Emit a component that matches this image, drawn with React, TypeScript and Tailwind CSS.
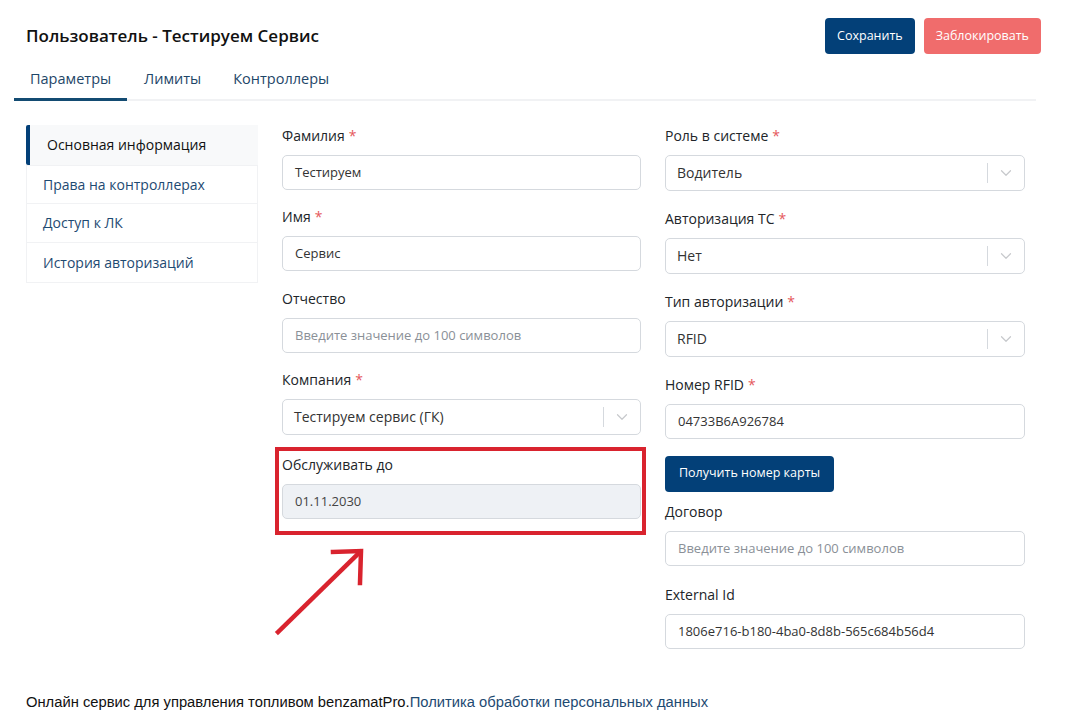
import { ChevronDown } from 'lucide-react';

const font = { fontFamily: '"Open Sans", "Noto Sans", sans-serif' };

function Label({ text, required }: { text: string; required?: boolean }) {
  return (
    <div className="h-[20px] text-[14px] leading-[20px] text-[#212529] mb-[9px]">
      {text}
      {required && <span className="text-[#e5585c] ml-[4px]">*</span>}
    </div>
  );
}

function TextInput({ value, placeholder, disabled }: { value?: string; placeholder?: string; disabled?: boolean }) {
  return (
    <div
      className={`h-[35px] rounded-[5px] border border-[#d5d9de] px-[12px] flex items-center text-[13px] ${
        disabled ? 'bg-[#eef1f5] text-[#444]' : 'bg-white text-[#333]'
      }`}
    >
      {value ? <span>{value}</span> : <span className="text-[#8a9097]">{placeholder}</span>}
    </div>
  );
}

function Select({ value }: { value: string }) {
  return (
    <div className="h-[36px] rounded-[5px] border border-[#d5d9de] bg-white pl-[11px] flex items-center text-[14px] text-[#333]">
      <span className="flex-1">{value}</span>
      <span className="w-px h-[20px] bg-[#d5d9de]" />
      <span className="w-[36px] flex items-center justify-center text-[#c7c9cc]">
        <ChevronDown className="w-[18px] h-[18px]" strokeWidth={1.6} />
      </span>
    </div>
  );
}

export default function App() {
  return (
    <div className="relative w-[1066px] h-[723px] bg-white overflow-hidden" style={font}>
      <div className="pl-[14px] pr-[30px]">
        {/* Header */}
        <div className="flex items-center justify-between pl-[12px] -mr-[5px] pt-[18px]">
          <h1 className="text-[17px] font-semibold text-[#111]">Пользователь - Тестируем Сервис</h1>
          <div className="flex gap-[9px]">
            <button className="h-[36px] px-[12px] rounded-[4px] bg-[#034078] text-white text-[12.5px]">Сохранить</button>
            <button className="h-[36px] px-[12px] rounded-[4px] bg-[#f06c6c] text-white text-[12.5px]">Заблокировать</button>
          </div>
        </div>

        {/* Tabs */}
        <div className="flex border-b-[2px] border-[#f1f2f4] mt-[6px] text-[14.5px] text-[#1e4668]">
          <div className="px-[16px] pt-[8px] pb-[8px] border-b-[3px] border-[#134b72] -mb-[2px] w-[113px]">Параметры</div>
          <div className="pl-[17px] pr-[16px] pt-[8px] pb-[8px]">Лимиты</div>
          <div className="px-[16px] pt-[8px] pb-[8px]">Контроллеры</div>
        </div>

        {/* Content */}
        <div className="flex pl-[12px] pt-[24px]">
          <div className="w-[232px] flex flex-col text-[14px]">
            <div className="h-[40px] flex items-center bg-[#f8f9fa] border-l-[4px] border-[#034078] pl-[17px] text-[#111] rounded-l-[2px]">
              Основная информация
            </div>
            <div className="h-[39px] flex items-center border border-[#f1f2f4] pl-[16px] text-[#1e4a72]">Права на контроллерах</div>
            <div className="h-[39px] flex items-center border border-[#f1f2f4] border-t-0 pl-[16px] text-[#1e4a72]">Доступ к ЛК</div>
            <div className="h-[40px] flex items-center border border-[#f1f2f4] border-t-0 pl-[16px] text-[#1e4a72]">История авторизаций</div>
          </div>

          <div className="flex gap-[24px] ml-[24px] mt-[1px]">
            {/* Left column */}
            <div className="w-[359px] flex flex-col">
              <Label text="Фамилия" required />
              <TextInput value="Тестируем" />
              <div className="h-[17px]" />
              <Label text="Имя" required />
              <TextInput value="Сервис" />
              <div className="h-[18px]" />
              <Label text="Отчество" />
              <TextInput placeholder="Введите значение до 100 символов" />
              <div className="h-[17px]" />
              <Label text="Компания" required />
              <Select value="Тестируем сервис (ГК)" />
              <div className="h-[20px]" />
              <div className="relative">
                <Label text="Обслуживать до" />
                <TextInput value="01.11.2030" disabled />
                <div className="absolute -left-[7px] -right-[5px] -top-[8px] -bottom-[16px] border-[4px] border-[#d9232e]" />
              </div>
            </div>

            {/* Right column */}
            <div className="w-[360px] flex flex-col">
              <Label text="Роль в системе" required />
              <Select value="Водитель" />
              <div className="h-[18px]" />
              <Label text="Авторизация ТС" required />
              <Select value="Нет" />
              <div className="h-[18px]" />
              <Label text="Тип авторизации" required />
              <Select value="RFID" />
              <div className="h-[18px]" />
              <Label text="Номер RFID" required />
              <TextInput value="04733B6A926784" />
              <div className="h-[17px]" />
              <button className="self-start h-[36px] px-[14px] rounded-[4px] bg-[#034078] text-white text-[12.5px]">
                Получить номер карты
              </button>
              <div className="h-[10px]" />
              <Label text="Договор" />
              <TextInput placeholder="Введите значение до 100 символов" />
              <div className="h-[19px]" />
              <Label text="External Id" />
              <TextInput value="1806e716-b180-4ba0-8d8b-565c684b56d4" />
            </div>
          </div>
        </div>
      </div>

      {/* Footer */}
      <div className="absolute left-[26px] top-[692px] text-[14.75px] leading-[20px]" style={{ fontFamily: '"Liberation Sans", sans-serif' }}>
        <span className="text-[#111]">Онлайн сервис для управления топливом benzamatPro.</span>
        <span className="text-[#1e4a72]">Политика обработки персональных данных</span>
      </div>

      {/* Annotation arrow */}
      <svg className="absolute left-0 top-0 pointer-events-none" width="1066" height="723">
        <g stroke="#d9232e" strokeWidth="4.5" fill="none" strokeLinecap="square">
          <line x1="278" y1="632" x2="360" y2="552" />
          <polyline points="333,552 361,551 360,583" />
        </g>
      </svg>
    </div>
  );
}
